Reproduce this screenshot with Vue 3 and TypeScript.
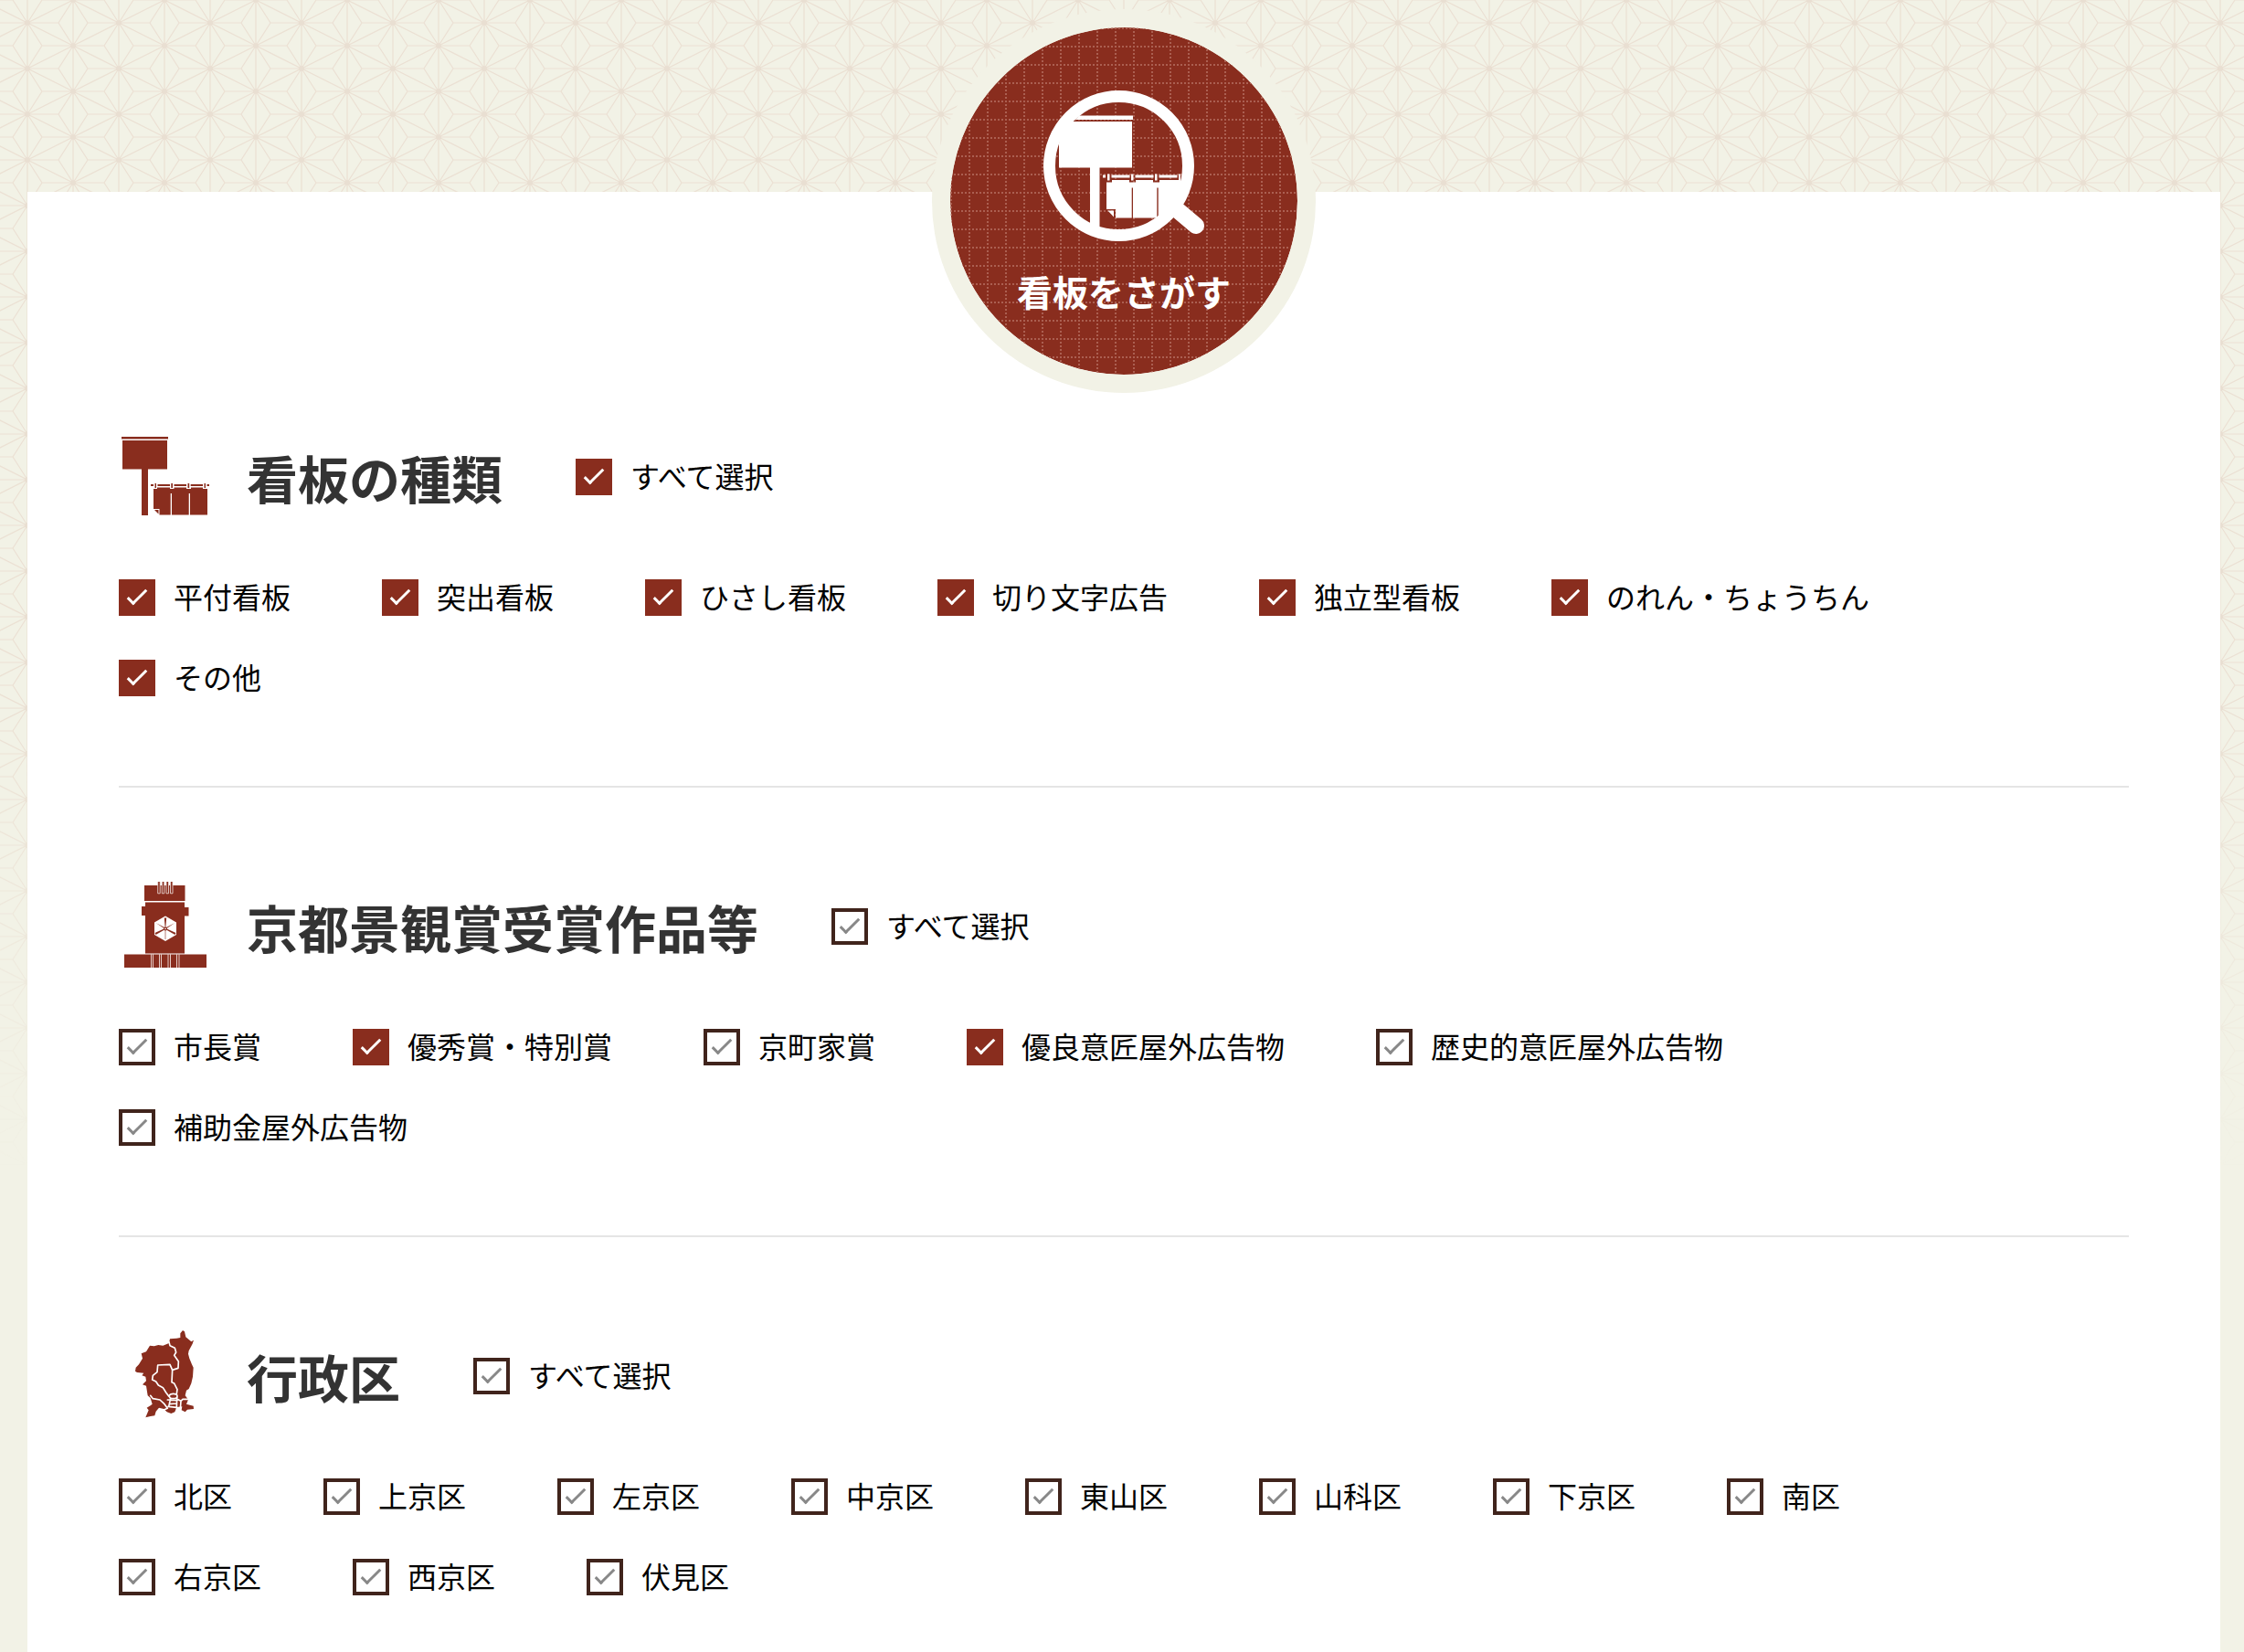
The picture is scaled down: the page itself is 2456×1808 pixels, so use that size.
<script setup lang="ts">
import { reactive } from 'vue'

type IconName = 'sign' | 'award' | 'map'

interface Option {
  label: string
  checked: boolean
}

interface Group {
  id: string
  title: string
  icon: IconName
  all: boolean
  options: Option[]
}

const make = (labels: string[], selected: string[] = []): Option[] =>
  labels.map((label) => ({ label, checked: selected.includes(label) }))

const kinds = ['平付看板', '突出看板', 'ひさし看板', '切り文字広告', '独立型看板', 'のれん・ちょうちん', 'その他']

const groups = reactive<Group[]>([
  { id: 'kind', title: '看板の種類', icon: 'sign', all: true, options: make(kinds, kinds) },
  {
    id: 'award',
    title: '京都景観賞受賞作品等',
    icon: 'award',
    all: false,
    options: make(
      ['市長賞', '優秀賞・特別賞', '京町家賞', '優良意匠屋外広告物', '歴史的意匠屋外広告物', '補助金屋外広告物'],
      ['優秀賞・特別賞', '優良意匠屋外広告物'],
    ),
  },
  {
    id: 'ward',
    title: '行政区',
    icon: 'map',
    all: false,
    options: make(['北区', '上京区', '左京区', '中京区', '東山区', '山科区', '下京区', '南区', '右京区', '西京区', '伏見区']),
  },
])

function toggleAll(group: Group) {
  group.options.forEach((option) => (option.checked = group.all))
}

function syncAll(group: Group) {
  group.all = group.options.every((option) => option.checked)
}
</script>

<template>
  <div class="page">
    <svg class="pattern" aria-hidden="true">
      <defs>
        <pattern id="asanoha" width="100" height="50" patternUnits="userSpaceOnUse">
          <g fill="none" stroke="#ebe0d3">
            <path
              stroke-width="1.2"
              d="M-20 0L30 25L80 0L130 25M-20 50L30 25L80 50L130 25
                 M-4 25H64M96 25H130M-20 0H14M46 0H114M-20 50H14M46 50H114
                 M30 25L14 0M30 25L46 0M30 25L14 50M30 25L46 50
                 M80 0L64 25L80 50L96 25ZM-20 0L-4 25L-20 50"
            />
            <path stroke="#ece4d7" stroke-width="1.6" d="M30 0V50M80 0V50" />
          </g>
          <g fill="#e9dfd2">
            <circle cx="30" cy="25" r="3" />
            <circle cx="80" cy="0" r="3" />
            <circle cx="80" cy="50" r="3" />
          </g>
        </pattern>
      </defs>
      <rect width="100%" height="100%" fill="url(#asanoha)" />
    </svg>

    <main class="panel">
      <h1 class="badge">
        <svg class="badge-grid" viewBox="0 0 380 380" aria-hidden="true">
          <defs>
            <pattern id="stitch" width="20" height="20" patternUnits="userSpaceOnUse">
              <path d="M0 1H20M1 0V20" stroke="#ab5f51" stroke-width="2" stroke-dasharray="2 2" fill="none" />
            </pattern>
          </defs>
          <circle cx="190" cy="190" r="190" fill="url(#stitch)" />
        </svg>
        <svg class="badge-icon" viewBox="0 0 176 168" aria-hidden="true">
          <circle cx="82.500" cy="83.500" r="76" fill="none" stroke="#fff" stroke-width="13" />
          <path d="M148 133L167 149" stroke="#fff" stroke-width="18" stroke-linecap="round" />
          <g fill="#fff" transform="translate(0 1.600)">
            <path
              d="M39 27H98V31.500H35ZM30 33.500H97V84H61.500V151H51V84H17V58L18 45Z
                 M65 92H68V95H65ZM70 91H72.500V98H70ZM74.500 92H94.500V95H74.500ZM96 91H98.500V98H96Z
                 M100.500 92H120.500V95H100.500ZM122 91H124.500V98H122ZM126.500 92H146.500V95H126.500Z
                 M148 91H150V98H148ZM69 100H75V97.500H94V100H101V97.500H120V100H127V97.500H150V128L140 139H125.700V106H124.300V139H98V106H96.700V139H79V129.500H69Z"
            />
            <path d="M70.500 131H77V138Z" />
          </g>
        </svg>
        <span class="badge-text">看板をさがす</span>
      </h1>

      <section v-for="group in groups" :key="group.id" class="group">
        <header class="group-head">
          <svg class="group-icon" viewBox="0 0 100 100" fill="#892d1e" aria-hidden="true">
            <g v-if="group.icon === 'sign'" transform="translate(0 3)">
              <path d="M3 3H54V5.500H3ZM4 7H53V38.500H32V89H25V38.500H4Z" />
              <path
                d="M35 55H38V57H35ZM39.500 54H41V59H39.500ZM42.500 55H56V57H42.500ZM57.300 54H59V59H57.300ZM60.500 55H74V57H60.500ZM75.500 54H77.200V59H75.500ZM78.700 55H92V57H78.700ZM93.500 54H95V59H93.500ZM96.500 55H99V57H96.500Z
                   M38 60H42V58.500H56V60H60.500V58.500H74V60H79V58.500H92V60H97V88.500H78V65H76.700V88.500H58V65H56.700V88.500H44.500V82H38ZM39 83H43.500V87.500Z"
              />
            </g>
            <g v-else-if="group.icon === 'award'">
              <path d="M28 5H72.500V22H28ZM29 23.500H72V79.500H29ZM25 28H29V38H25ZM72 29H76.500V38.500H72ZM6 80.500H96V95H6Z" />
              <path
                stroke="#f3e6e3"
                stroke-width=".8"
                d="M42.700 1V13.800H45.200V1M47.300 1V13.800H49.800V1M52 1V13.800H54.500V1M56.500 1V13.800H59V1"
              />
              <path
                fill="none"
                stroke="#e6cdc8"
                d="M35.500 80V95M37.500 80V95M44.500 80V95M46.500 80V95M54 80V95M56.500 80V95M63.500 80V95M66 80V95"
              />
              <path fill="#fff" d="M51 38.500L63 45.500V59L51 66L39 59V45.500Z" />
              <path d="M49.800 40.500H52.200L51.300 51.500H50.700ZM40.500 46L51 51.500L50.300 52.500ZM61.500 46L51 51.500L51.700 52.500ZM39.500 57L50.500 52L51 53L40.500 59ZM62.500 57L51.500 52L51 53L61.500 59ZM50.700 53H51.300V64H50.700Z" />
              <circle cx="51" cy="52.500" r="2" />
              <circle cx="51" cy="52.500" r=".8" fill="#fff" />
            </g>
            <g v-else transform="translate(0 -16) scale(.33333)">
              <path
                d="M202 58L210 48L216 52L220 70L238 85L246 80L242 92L230 115L228 125L232 140L240 160L245 170L243 200L238 222L230 240L222 245L218 262L228 275L222 290L245 296L246 306L225 308L218 316L206 310L208 298L190 300L184 316L172 321L158 316L148 306L132 302L122 314L118 328L104 330L88 334L98 310L92 302L104 295L110 290L104 270L95 262L90 230L78 226L90 214L88 200L76 196L82 188L60 186L54 182L56 170L66 160L78 140L74 124L90 118L102 98L116 100L130 96L145 98L165 90L168 76L190 74L202 72Z"
              />
              <g fill="none" stroke="#fff" stroke-width="5" stroke-linejoin="round" stroke-linecap="round">
                <path d="M165 86L168 98L184 106L188 120L182 130L196 150L195 172L176 178L168 160L128 162L126 185L112 196L110 210L122 216L130 228L145 236L155 252L164 264" />
                <path d="M176 178L174 218L182 222L192 242L190 256" />
                <path d="M104 262L112 272L135 276L150 290L160 304L146 310" />
                <ellipse cx="179" cy="264" rx="13" ry="8" />
                <path d="M160 276L192 278M170 272L164 298M166 290L190 288M162 298L190 301M191 268L190 302M192 274L204 280L210 274L232 274M204 280L202 306" />
              </g>
            </g>
          </svg>
          <h2 class="group-title">{{ group.title }}</h2>
          <label class="check">
            <input v-model="group.all" type="checkbox" class="check-input" @change="toggleAll(group)" />
            <span class="check-text">すべて選択</span>
          </label>
        </header>
        <ul class="options">
          <li v-for="option in group.options" :key="option.label" class="option">
            <label class="check">
              <input v-model="option.checked" type="checkbox" class="check-input" @change="syncAll(group)" />
              <span class="check-text">{{ option.label }}</span>
            </label>
          </li>
        </ul>
      </section>
    </main>
  </div>
</template>

<style>
html {
  background: #f2f2e6;
}
body {
  margin: 0;
}
</style>

<style scoped>
.page {
  position: relative;
  padding: 210px 26px 0 30px;
  color: #000;
  font-family: 'Noto Sans CJK JP', sans-serif;
  font-size: 32px;
  line-height: 48px;
  overflow: hidden;
}

.pattern {
  position: absolute;
  top: 0;
  left: 0;
  width: 100%;
  height: 1280px;
  -webkit-mask-image: linear-gradient(#000 60%, transparent);
  mask-image: linear-gradient(#000 60%, transparent);
}

.panel {
  position: relative;
  display: flex;
  flex-direction: column;
  padding: 0 100px;
  background: #fff;
}

.badge {
  position: relative;
  box-sizing: border-box;
  display: flex;
  flex-direction: column;
  align-items: center;
  align-self: center;
  width: 420px;
  height: 420px;
  margin: -200px 0 0;
  padding-top: 68px;
  border: 20px solid #f2f2e6;
  border-radius: 50%;
  background: #892d1e;
  background-clip: padding-box;
  color: #fff;
  font-size: 39px;
  line-height: 60px;
}

.badge-grid {
  position: absolute;
  inset: 0;
}

.badge-icon {
  position: relative;
  width: 176px;
  height: 168px;
}

.badge-text {
  position: relative;
  margin-top: 22px;
}

.group {
  padding: 102px 0 98px;
  border-bottom: 2px solid #e5e5e5;
}

.group:first-of-type {
  padding-top: 42px;
}

.group:last-child {
  padding-bottom: 62px;
  border-bottom: 0;
}

.group-head {
  display: flex;
  align-items: center;
  margin-bottom: 62px;
}

.group-icon {
  width: 100px;
  height: 100px;
  margin-right: 40px;
}

.group-title {
  margin: 0 80px 0 0;
  color: #333;
  font-size: 56px;
  line-height: 84px;
}

.options {
  display: flex;
  flex-wrap: wrap;
  row-gap: 48px;
  margin: 0;
  padding: 0;
  list-style: none;
}

.option {
  margin-right: 100px;
}

.check {
  display: flex;
  align-items: center;
  gap: 20px;
  height: 40px;
  cursor: pointer;
}

.check-text {
  padding-bottom: 4px;
}

.check-input {
  appearance: none;
  position: relative;
  box-sizing: border-box;
  width: 40px;
  height: 40px;
  margin: 0;
  border: 4px solid #40241c;
  background: #fff;
  cursor: pointer;
}

.check-input::after {
  content: '';
  position: absolute;
  top: 2px;
  left: 11px;
  box-sizing: border-box;
  width: 10px;
  height: 22px;
  border: solid #888;
  border-width: 0 3px 3px 0;
  transform: rotate(45deg);
}

.check-input:checked {
  border-color: #892d1e;
  background: #892d1e;
}

.check-input:checked::after {
  border-color: #fff;
}
</style>
